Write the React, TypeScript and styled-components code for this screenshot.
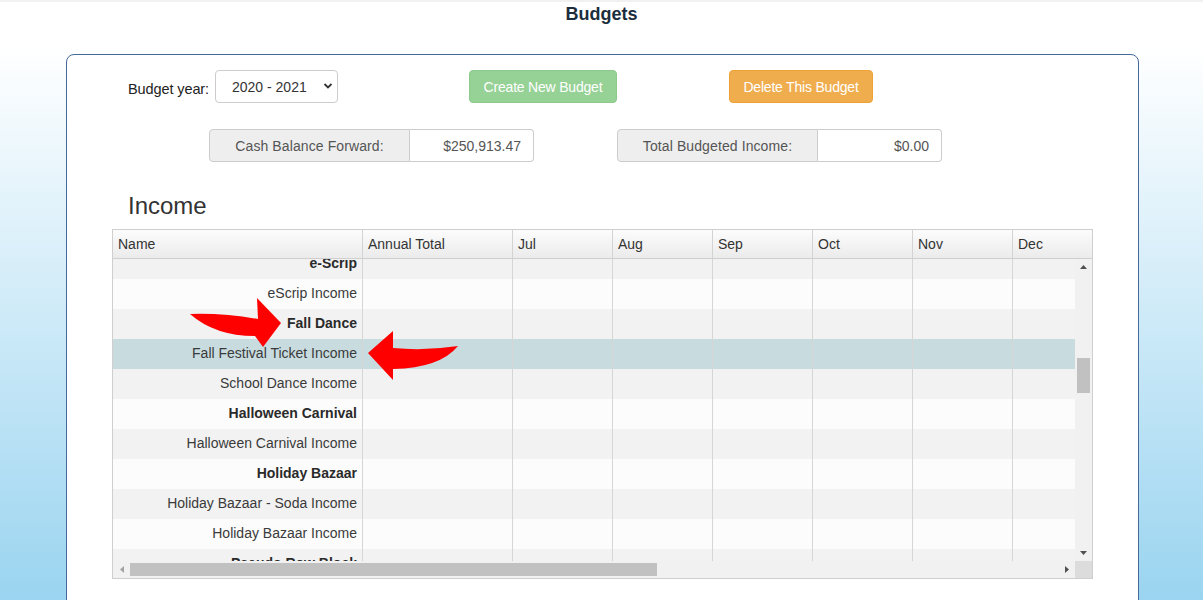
import React from "react";
import styled, { createGlobalStyle } from "styled-components";

const GlobalStyle = createGlobalStyle`
  html, body { margin: 0; padding: 0; }
  body {
    font-family: "Liberation Sans", Arial, sans-serif;
    overflow: hidden;
  }
  * { box-sizing: border-box; }
`;

const Page = styled.div`
  height: 600px;
  overflow: hidden;
  border-top: 2px solid #f1f1f1;
  background: linear-gradient(to bottom, #ffffff 0px, #ffffff 45px, #9ad4f0 600px);
`;

const Title = styled.h1`
  margin: 0;
  height: 52px;
  padding-top: 1px;
  text-align: center;
  font-size: 18px;
  line-height: 22px;
  font-weight: bold;
  color: #1b2d3d;
`;

const Panel = styled.div`
  margin: 0 64px 0 66px;
  height: 620px;
  background: #fff;
  border: 1px solid #44699a;
  border-radius: 8px;
`;

const Row = styled.div<{ $top: number; $left: number }>`
  display: flex;
  align-items: center;
  height: 33px;
  margin-top: ${(p) => p.$top}px;
  padding-left: ${(p) => p.$left}px;
`;

const Label = styled.label`
  width: 87px;
  font-size: 14.5px;
  color: #222;
  padding-top: 4px;
  letter-spacing: -0.1px;
  white-space: nowrap;
`;

const SelectWrap = styled.div`
  position: relative;
  width: 123px;
  height: 33px;
`;

const Select = styled.select`
  appearance: none;
  -webkit-appearance: none;
  width: 100%;
  height: 100%;
  border: 1px solid #cccccc;
  border-radius: 4px;
  background: #fff;
  padding: 0 0 0 16px;
  font-family: "Liberation Sans", Arial, sans-serif;
  font-size: 14px;
  color: #333;
  outline: none;
`;

const Chevron = styled.svg`
  position: absolute;
  right: 5px;
  top: 12px;
  pointer-events: none;
`;

const Button = styled.button<{ $variant: "success" | "warning"; $ml: number; $w: number }>`
  margin-left: ${(p) => p.$ml}px;
  width: ${(p) => p.$w}px;
  height: 33px;
  border-radius: 4px;
  font-family: "Liberation Sans", Arial, sans-serif;
  font-size: 14px;
  color: #fff;
  padding: 0;
  cursor: pointer;
  letter-spacing: -0.2px;
  background: ${(p) => (p.$variant === "success" ? "#96d196" : "#f0ad4e")};
  border: 1px solid ${(p) => (p.$variant === "success" ? "#8cc98c" : "#eea236")};
`;

const InputGroup = styled.div<{ $ml?: number }>`
  display: flex;
  width: 325px;
  height: 33px;
  margin-left: ${(p) => p.$ml ?? 0}px;
  font-size: 14px;
  color: #555;
`;

const Addon = styled.div`
  width: 201px;
  display: flex;
  align-items: center;
  justify-content: center;
  background: #eeeeee;
  border: 1px solid #cccccc;
  border-radius: 4px 0 0 4px;
  letter-spacing: 0.1px;
`;

const Value = styled.div`
  flex: 1;
  display: flex;
  align-items: center;
  justify-content: flex-end;
  padding-right: 12px;
  background: #fff;
  border: 1px solid #cccccc;
  border-left: none;
  border-radius: 0 4px 4px 0;
`;

const SectionTitle = styled.h2`
  margin: 30px 0 0 0;
  padding-left: 61px;
  font-size: 24px;
  line-height: 28px;
  font-weight: normal;
  color: #333;
`;

const Grid = styled.div`
  position: relative;
  margin: 9px 0 0 45px;
  width: 981px;
  height: 350px;
  border: 1px solid #cfcfcf;
  font-size: 14px;
  color: #333;
  overflow: hidden;
`;

const HeaderRow = styled.div`
  display: flex;
  height: 29px;
  overflow: hidden;
  border-bottom: 1px solid #cfcfcf;
  background: linear-gradient(to bottom, #fcfcfc, #ebebeb);
`;

const HeaderCell = styled.div<{ $w: number }>`
  flex: 0 0 ${(p) => p.$w}px;
  padding-left: 5px;
  padding-bottom: 1px;
  display: flex;
  align-items: center;
  border-right: 1px solid #d3d3d3;
  color: #333;
`;

const Body = styled.div`
  display: grid;
  grid-template-columns: 962px 17px;
  grid-template-rows: 302px 17px;
`;

const Viewport = styled.div`
  overflow: hidden;
  height: 302px;
`;

const Rows = styled.div`
  margin-top: -10px;
  width: 1600px;
`;

const DataRow = styled.div<{ $bg: string }>`
  display: flex;
  height: 30px;
  background: ${(p) => p.$bg};
`;

const Cell = styled.div<{ $w: number; $bold?: boolean; $name?: boolean }>`
  flex: 0 0 ${(p) => p.$w}px;
  display: flex;
  align-items: center;
  justify-content: ${(p) => (p.$name ? "flex-end" : "flex-start")};
  padding-right: ${(p) => (p.$name ? 5 : 0)}px;
  padding-bottom: 2px;
  border-right: 1px solid #d6d6d6;
  font-weight: ${(p) => (p.$bold ? "bold" : "normal")};
  color: ${(p) => (p.$bold ? "#2a2a2a" : "#3a3a3a")};
  white-space: nowrap;
`;

const VScroll = styled.div`
  display: flex;
  flex-direction: column;
  align-items: center;
  background: #f1f1f1;
  height: 302px;
`;

const HScroll = styled.div`
  display: flex;
  align-items: center;
  background: #f1f1f1;
  height: 17px;
`;

const Corner = styled.div`
  background: #dcdcdc;
`;

const VThumb = styled.div`
  width: 13px;
  height: 35px;
  background: #c1c1c1;
`;

const HThumb = styled.div`
  height: 13px;
  background: #c1c1c1;
`;

const Spacer = styled.div`
  flex: 1;
`;

const ArrowBox = styled.div<{ $size: number }>`
  flex: 0 0 ${(p) => p.$size}px;
  width: ${(p) => p.$size}px;
  height: ${(p) => p.$size}px;
  display: flex;
  align-items: center;
  justify-content: center;
`;

const Overlay = styled.svg`
  position: absolute;
  left: -1px;
  top: -1px;
  pointer-events: none;
  z-index: 2;
`;

type RowData = { name: string; bold?: boolean };

const rows: RowData[] = [
  { name: "e-Scrip", bold: true },
  { name: "eScrip Income" },
  { name: "Fall Dance", bold: true },
  { name: "Fall Festival Ticket Income" },
  { name: "School Dance Income" },
  { name: "Halloween Carnival", bold: true },
  { name: "Halloween Carnival Income" },
  { name: "Holiday Bazaar", bold: true },
  { name: "Holiday Bazaar - Soda Income" },
  { name: "Holiday Bazaar Income" },
  { name: "Pseudo Row Block", bold: true },
];

const visibleMonths = ["Jul", "Aug", "Sep", "Oct", "Nov", "Dec"];
const allMonths = [...visibleMonths, "Jan", "Feb", "Mar", "Apr", "May", "Jun"];
const SELECTED = 3;

const Tri = ({ dir, color }: { dir: "up" | "down" | "left" | "right"; color: string }) => {
  const pts: Record<string, string> = {
    up: "0,4 7,4 3.5,0",
    down: "0,0 7,0 3.5,4",
    left: "4,0 4,7 0,3.5",
    right: "0,0 0,7 4,3.5",
  };
  const vertical = dir === "up" || dir === "down";
  return (
    <svg width={vertical ? 7 : 4} height={vertical ? 4 : 7} viewBox={vertical ? "0 0 7 4" : "0 0 4 7"}>
      <polygon points={pts[dir]} fill={color} />
    </svg>
  );
};

export default function App() {
  const vThumbTop = 99 - 16;
  return (
    <>
      <GlobalStyle />
      <Page>
        <Title>Budgets</Title>
        <Panel>
          <Row $top={15} $left={61}>
            <Label>Budget year:</Label>
            <SelectWrap>
              <Select defaultValue="2020 - 2021">
                <option>2020 - 2021</option>
                <option>2019 - 2020</option>
              </Select>
              <Chevron width="10" height="8" viewBox="0 0 10 8">
                <path d="M1.5 2 L5 5.5 L8.5 2" fill="none" stroke="#333" strokeWidth="1.8" />
              </Chevron>
            </SelectWrap>
            <Button $variant="success" $ml={131} $w={148}>Create New Budget</Button>
            <Button $variant="warning" $ml={112} $w={144}>Delete This Budget</Button>
          </Row>
          <Row $top={26} $left={142}>
            <InputGroup>
              <Addon>Cash Balance Forward:</Addon>
              <Value>$250,913.47</Value>
            </InputGroup>
            <InputGroup $ml={83}>
              <Addon>Total Budgeted Income:</Addon>
              <Value>$0.00</Value>
            </InputGroup>
          </Row>
          <SectionTitle>Income</SectionTitle>
          <Grid>
            <HeaderRow>
              <HeaderCell $w={250}>Name</HeaderCell>
              <HeaderCell $w={150}>Annual Total</HeaderCell>
              {visibleMonths.map((m) => (
                <HeaderCell key={m} $w={100}>{m}</HeaderCell>
              ))}
            </HeaderRow>
            <Body>
              <Viewport>
                <Rows>
                  {rows.map((r, i) => (
                    <DataRow
                      key={r.name}
                      $bg={i === SELECTED ? "#c8dce0" : i % 2 === 0 ? "#f2f2f2" : "#fcfcfc"}
                    >
                      <Cell $w={250} $name $bold={r.bold}>{r.name}</Cell>
                      <Cell $w={150} />
                      {allMonths.map((m) => (
                        <Cell key={m} $w={100} />
                      ))}
                    </DataRow>
                  ))}
                </Rows>
              </Viewport>
              <VScroll>
                <ArrowBox $size={16}>
                  <Tri dir="up" color="#505050" />
                </ArrowBox>
                <VThumb style={{ marginTop: vThumbTop }} />
                <Spacer />
                <ArrowBox $size={17}>
                  <Tri dir="down" color="#505050" />
                </ArrowBox>
              </VScroll>
              <HScroll>
                <ArrowBox $size={17}>
                  <Tri dir="left" color="#a3a3a3" />
                </ArrowBox>
                <HThumb style={{ width: 527 }} />
                <Spacer />
                <ArrowBox $size={17}>
                  <Tri dir="right" color="#505050" />
                </ArrowBox>
              </HScroll>
              <Corner />
            </Body>
            <Overlay width={981} height={350} viewBox="112 229 981 350">
              <path
                d="M190,314 Q225,313 258,319 L257,298 L281,323 L263,347 L255,336 Q215,336 190,314 Z"
                fill="#ff0000"
              />
              <path
                d="M368,353 L393,331 L393,348 Q425,351 458,346 Q440,368 393,369 L393,380 Z"
                fill="#ff0000"
              />
            </Overlay>
          </Grid>
        </Panel>
      </Page>
    </>
  );
}
